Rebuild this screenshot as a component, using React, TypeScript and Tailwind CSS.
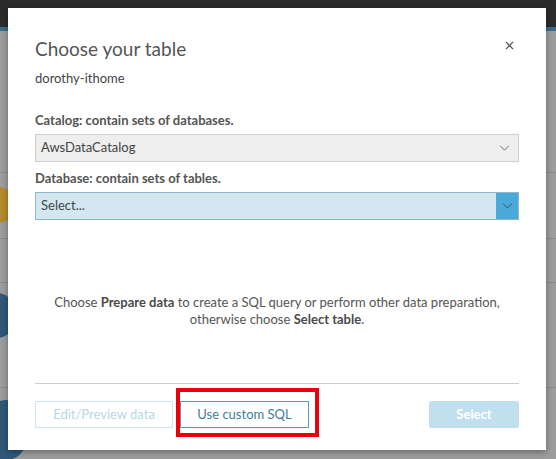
import React from 'react';

function Chevron({ className }: { className?: string }) {
  return (
    <svg viewBox="0 0 12 7" className={className} fill="none" stroke="currentColor" strokeWidth="1.1">
      <polyline points="1,1 6,6 11,1" />
    </svg>
  );
}

function Backdrop() {
  return (
    <div className="flex h-full w-full flex-col bg-[#9c9c9c]">
      <div className="h-[27px] bg-[#2b2b2b]" />
      <div className="h-[4px] bg-[#3c6b88]" />
      <div className="flex flex-1 flex-col">
        <div className="h-[142px] border-b border-[#8a8a8a]" />
        <div className="relative h-[66px] border-b border-[#8a8a8a]">
          <div className="absolute -left-[18px] top-[14px] h-[36px] w-[32px] rounded-full bg-[#b48a2c]" />
        </div>
        <div className="h-[44px] border-b border-[#8a8a8a]" />
        <div className="relative h-[105px] border-b border-[#8a8a8a]">
          <div className="absolute -left-[20px] top-[10px] h-[45px] w-[34px] rounded-full bg-[#2f5878]" />
        </div>
        <div className="relative flex-1">
          <div className="absolute -left-[14px] top-[12px] h-[60px] w-[40px] rounded-full bg-[#2f5878]" />
        </div>
      </div>
    </div>
  );
}

export default function App() {
  return (
    <div
      className="relative h-[459px] w-[556px] overflow-hidden"
      style={{ fontFamily: 'Lato, "Liberation Sans", sans-serif' }}
    >
      <Backdrop />
      <div className="absolute left-[8px] top-[8px] flex h-[442px] w-[538px] flex-col bg-white px-[27px] shadow-[0_2px_6px_rgba(0,0,0,0.35)]">
        <div className="flex items-start justify-between pt-[28px]">
          <h2 className="text-[19px] leading-[26px] text-[#555555]">Choose your table</h2>
          <button className="mr-[5px] mt-[5px] text-[#555555]">
            <svg viewBox="0 0 10 10" className="h-[9px] w-[9px]" stroke="currentColor" strokeWidth="1.4">
              <line x1="1" y1="1" x2="9" y2="9" />
              <line x1="9" y1="1" x2="1" y2="9" />
            </svg>
          </button>
        </div>
        <div className="mt-[7px] text-[13px] leading-[18px] text-[#444444]">dorothy-ithome</div>

        <label className="mt-[24px] text-[13px] font-bold leading-[18px] text-[#545454]">
          Catalog: contain sets of databases.
        </label>
        <div className="mt-[5px] flex h-[28px] items-center justify-between border border-[#cfcfcf] bg-[#eeeeee] pl-[5px] pr-[8px] text-[13px] text-[#444444]">
          <span>AwsDataCatalog</span>
          <Chevron className="h-[6px] w-[11px] text-[#666666]" />
        </div>

        <label className="mt-[7px] text-[13px] font-bold leading-[18px] text-[#545454]">
          Database: contain sets of tables.
        </label>
        <div className="mt-[5px] flex h-[28px] items-stretch border border-[#8fb8cb] bg-[#d2e7ef] text-[13px] text-[#444444]">
          <span className="flex flex-1 items-center pl-[5px]">Select...</span>
          <span className="flex w-[22px] items-center justify-center bg-[#4aa9d8]">
            <Chevron className="h-[6px] w-[11px] text-[#2f4f60]" />
          </span>
        </div>

        <p className="mt-[74px] text-center text-[13px] leading-[17px] text-[#555555]">
          Choose <b className="text-[#4a4a4a]">Prepare data</b> to create a SQL query or perform other data preparation,
          <br />
          otherwise choose <b className="text-[#4a4a4a]">Select table</b>.
        </p>

        <div className="mt-[55px] border-t border-[#cccccc]" />

        <div className="mt-[17px] flex items-center">
          <button className="h-[27px] w-[138px] border border-[#cfe5ef] text-[13px] text-[#b8d8e7]">
            Edit/Preview data
          </button>
          <div className="relative ml-[7px]">
            <button className="h-[27px] w-[129px] border border-[#5b9bb6] text-[13px] text-[#3f7e99]">
              Use custom SQL
            </button>
            <div className="pointer-events-none absolute -bottom-[9px] -left-[4px] -right-[10px] -top-[13px] border-[4px] border-[#e8000b]" />
          </div>
          <button className="ml-auto h-[27px] w-[90px] rounded-[2px] bg-[#c0e0f0] text-[13px] font-bold text-white">
            Select
          </button>
        </div>
      </div>
    </div>
  );
}
